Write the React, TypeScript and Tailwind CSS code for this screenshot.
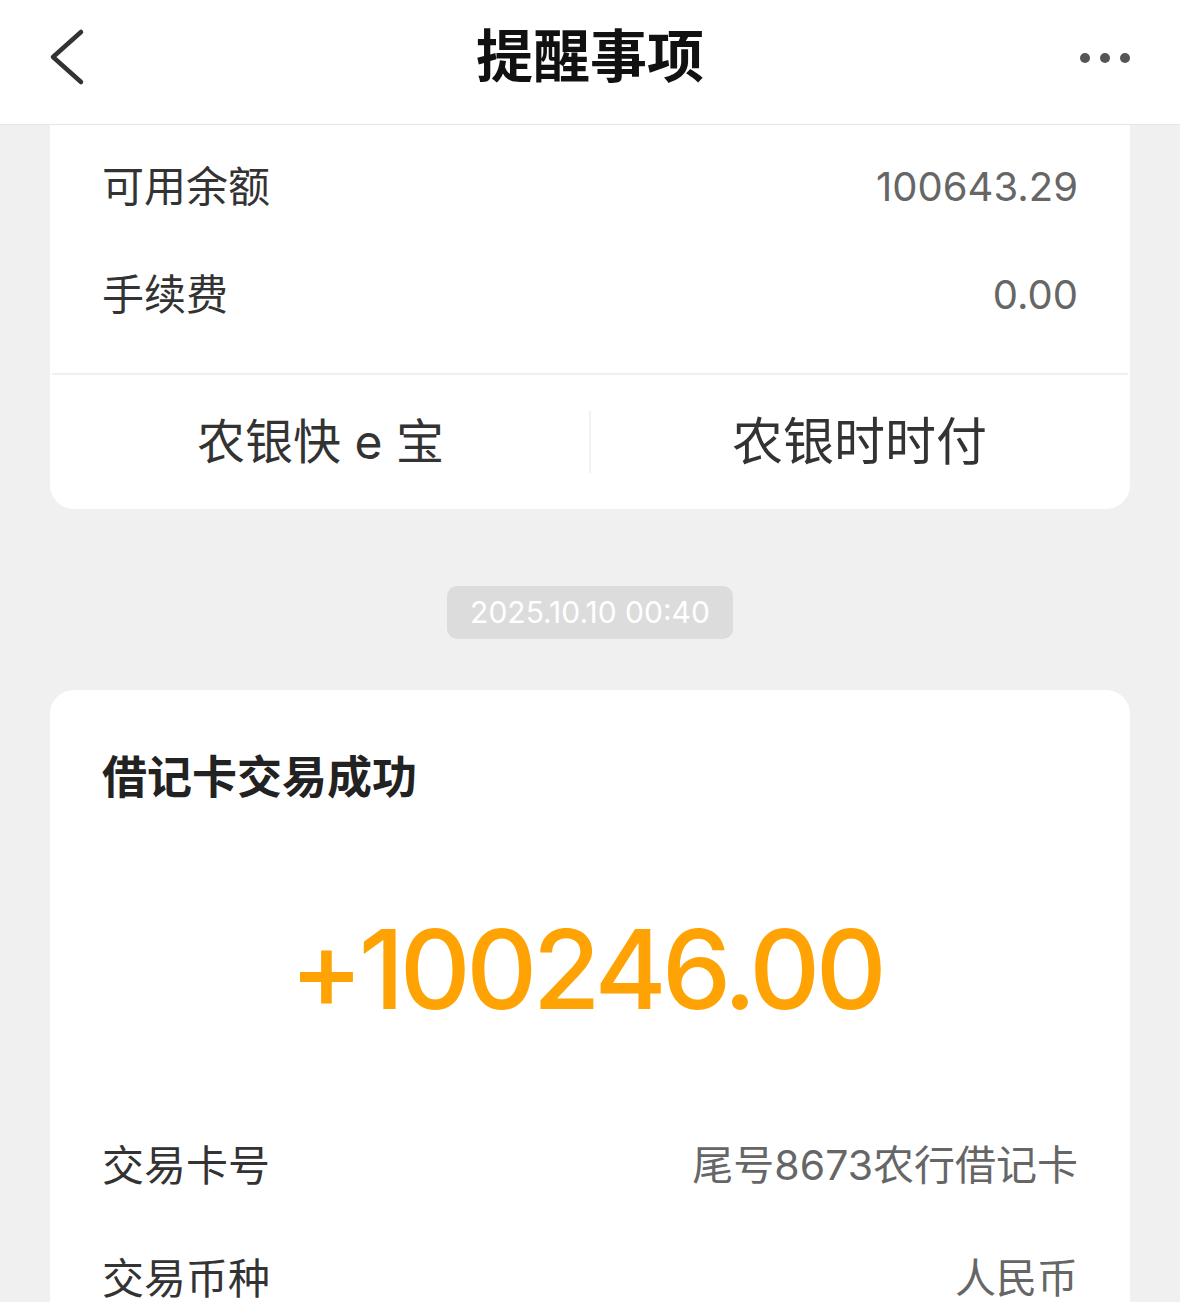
const font = { fontFamily: 'Inter, "Noto Sans CJK SC", sans-serif' };

type RowProps = { label: string; value: string };

function InfoRow({ label, value }: RowProps) {
  return (
    <div className="flex h-[108px] items-center justify-between">
      <span className="text-[42px] leading-none text-[#333]">{label}</span>
      <span className="text-[40px] leading-none text-[#666]">{value}</span>
    </div>
  );
}

function DetailRow({ label, value }: RowProps) {
  return (
    <div className="flex h-[113px] items-center justify-between">
      <span className="text-[42px] leading-none text-[#333]">{label}</span>
      <span className="text-[41px] leading-none text-[#666]">{value}</span>
    </div>
  );
}

export default function App() {
  return (
    <div className="h-[1302px] w-[1180px] overflow-hidden bg-[#f0f0f0]" style={font}>
      <header className="relative flex h-[125px] items-center justify-center border-b border-[#e6e6e6] bg-white">
        <button className="absolute left-[48px] top-[28px]">
          <svg width="38" height="58" viewBox="0 0 38 58" fill="none">
            <polyline
              points="33,4 5,29 33,54"
              stroke="#333"
              strokeWidth="4.5"
              strokeLinecap="round"
              strokeLinejoin="round"
            />
          </svg>
        </button>
        <h1 className="-mt-[10px] text-[57px] font-bold text-[#111]">提醒事项</h1>
        <div className="absolute right-[50px] top-[53px] flex gap-[10px]">
          <span className="h-[10px] w-[10px] rounded-full bg-[#555]" />
          <span className="h-[10px] w-[10px] rounded-full bg-[#555]" />
          <span className="h-[10px] w-[10px] rounded-full bg-[#555]" />
        </div>
      </header>

      <section className="mx-[50px] rounded-b-[24px] bg-white">
        <div className="px-[52px] pb-[24px] pt-[8px]">
          <InfoRow label="可用余额" value="100643.29" />
          <InfoRow label="手续费" value="0.00" />
        </div>
        <div className="mx-[2px] flex h-[136px] items-center border-t-2 border-[#f0f0f0]">
          <div className="flex flex-1 justify-center text-[48px] text-[#333]">农银快 e 宝</div>
          <div className="h-[62px] w-[2px] bg-[#f2f2f2]" />
          <div className="flex flex-1 justify-center text-[51px] text-[#333]">农银时时付</div>
        </div>
      </section>

      <div className="mt-[77px] flex justify-center">
        <div className="flex h-[53px] w-[286px] items-center justify-center rounded-[10px] bg-[#dcdcdc] text-[30px] text-white">
          2025.10.10 00:40
        </div>
      </div>

      <section className="mx-[50px] mt-[51px] rounded-[24px] bg-white px-[52px] pt-[60px]">
        <h2 className="h-[56px] text-[45px] font-bold leading-[56px] text-[#222]">借记卡交易成功</h2>
        <div className="mt-[103px] flex h-[120px] items-center justify-center">
          <span className="-ml-[8px] text-[110px] font-medium leading-none tracking-[-4.5px] text-[#ffa304]">
            +100246.00
          </span>
        </div>
        <div className="mt-[80px]">
          <DetailRow label="交易卡号" value="尾号8673农行借记卡" />
          <DetailRow label="交易币种" value="人民币" />
        </div>
      </section>
    </div>
  );
}
